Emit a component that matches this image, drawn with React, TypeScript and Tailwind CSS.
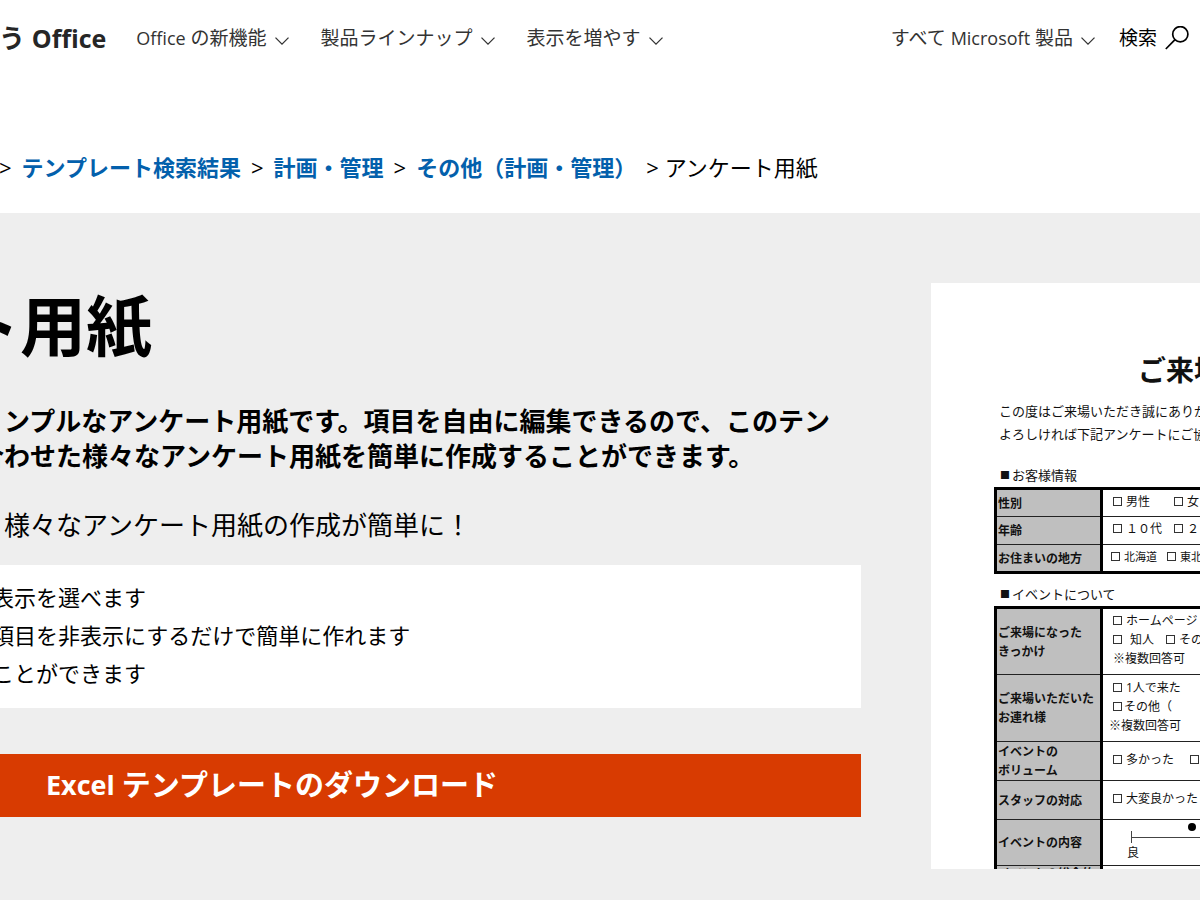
import type { ReactNode } from "react";

function Chevron() {
  return (
    <svg className="mt-1.5 h-2 w-3.5 shrink-0" viewBox="0 0 14 8" fill="none" stroke="#333" strokeWidth="1.3">
      <path d="M0.5 0.6 L7 7.1 L13.5 0.6" />
    </svg>
  );
}

function NavButton({ children }: { children: ReactNode }) {
  return (
    <button type="button" className="flex items-center gap-2 whitespace-nowrap text-[19px] leading-7 text-[#333]">
      <span>{children}</span>
      <Chevron />
    </button>
  );
}

function Latin({ children }: { children: ReactNode }) {
  return <span className="text-[18px]">{children}</span>;
}

function Check({ label, className = "gap-1" }: { label: string; className?: string }) {
  return (
    <label className={`flex shrink-0 items-center whitespace-nowrap ${className}`}>
      <input type="checkbox" className="size-[9px] shrink-0 appearance-none border border-[#333]" />
      <span>{label}</span>
    </label>
  );
}

function SectionTitle({ children }: { children: ReactNode }) {
  return (
    <h3 className="ml-[69px] flex items-center gap-0.5 text-[13px] leading-6">
      <span className="w-2.5 text-[10px]">■</span>
      <span>{children}</span>
    </h3>
  );
}

function FormTable({ children }: { children: ReactNode }) {
  return (
    <table className="ml-[63px] w-[480px] table-fixed border-collapse border-[3px] border-black text-[12px] leading-[19px]">
      <colgroup>
        <col className="w-[106px]" />
        <col />
      </colgroup>
      <tbody>{children}</tbody>
    </table>
  );
}

function FormRow({ title, className, children }: { title: ReactNode; className: string; children?: ReactNode }) {
  return (
    <tr className={`border-b border-[#222] ${className}`}>
      <th scope="row" className="whitespace-nowrap border-r-[3px] border-r-black bg-[#bfbfbf] p-0 pl-px text-left font-bold">
        {title}
      </th>
      <td className="p-0 pb-1 pl-2.5">{children}</td>
    </tr>
  );
}

function SurveySheet() {
  return (
    <div className="h-[586px] w-[600px] shrink-0 overflow-hidden bg-white pt-[69px] text-[#111]">
      <h2 className="ml-[207px] whitespace-nowrap text-[28px] leading-9 font-bold">ご来場</h2>
      <p className="mt-3 mb-[17px] ml-[68px] whitespace-nowrap text-[13px] leading-[23px]">
        この度はご来場いただき誠にありが
        <br />
        よろしければ下記アンケートにご協
      </p>
      <SectionTitle>お客様情報</SectionTitle>
      <FormTable>
        <FormRow title="性別" className="h-7">
          <div className="flex gap-6"><Check label="男性" /><Check label="女" /></div>
        </FormRow>
        <FormRow title="年齢" className="h-7">
          <div className="flex gap-3"><Check label="１０代" /><Check label="２" /></div>
        </FormRow>
        <FormRow title="お住まいの地方" className="h-7">
          <div className="-ml-0.5 flex gap-2.5 text-[11px]"><Check label="北海道" /><Check label="東北" /></div>
        </FormRow>
      </FormTable>
      <div className="h-2" />
      <SectionTitle>イベントについて</SectionTitle>
      <FormTable>
        <FormRow title={<>ご来場になった<br />きっかけ</>} className="h-[67px]">
          <Check label="ホームページ" />
          <div className="flex gap-3"><Check label="知人" className="gap-2" /><Check label="その他" /></div>
          <div>※複数回答可</div>
        </FormRow>
        <FormRow title={<>ご来場いただいた<br />お連れ様</>} className="h-[67px]">
          <Check label="1人で来た" />
          <Check label="その他（" className="gap-0.5" />
          <div className="-ml-1">※複数回答可</div>
        </FormRow>
        <FormRow title={<>イベントの<br />ボリューム</>} className="h-[39px]">
          <div className="flex gap-4"><Check label="多かった" /><Check label="" /></div>
        </FormRow>
        <FormRow title="スタッフの対応" className="h-[39px]">
          <Check label="大変良かった" />
        </FormRow>
        <FormRow title="イベントの内容" className="h-[46px]">
          <svg className="ml-4 h-6 w-[300px]" viewBox="0 0 300 24" fill="none" stroke="#444">
            <path d="M2.5 10 V22 M2.5 16.5 H300" />
            <circle cx="63" cy="6" r="4" fill="#000" stroke="none" />
          </svg>
          <div className="ml-3.5 leading-4">良</div>
        </FormRow>
        <FormRow title={<div className="leading-4">イベントの総合的</div>} className="h-4" />
      </FormTable>
    </div>
  );
}

export default function App() {
  return (
    <div className="min-h-screen overflow-x-hidden bg-[#eee] font-['Open_Sans','Noto_Sans_CJK_JP',sans-serif] text-black">
      <header className="flex h-[76px] items-center justify-between bg-white pr-[11px]">
        <nav className="flex items-center gap-8">
          <a href="#office" className="-ml-px -mr-0.5 whitespace-nowrap text-[26px] leading-9 font-bold text-[#262626]">
            う <span className="text-[25px]">Office</span>
          </a>
          <NavButton><Latin>Office</Latin> の新機能</NavButton>
          <NavButton>製品ラインナップ</NavButton>
          <NavButton>表示を増やす</NavButton>
        </nav>
        <div className="flex items-center gap-6">
          <NavButton>すべて <Latin>Microsoft</Latin> 製品</NavButton>
          <button type="button" className="flex items-center gap-2 whitespace-nowrap text-[19px] leading-7">
            <span>検索</span>
            <svg className="size-6" viewBox="0 0 24 24" fill="none" stroke="#000" strokeWidth="1.7">
              <circle cx="15.3" cy="8.2" r="7.6" />
              <path d="M10 13.6 L0.8 23" />
            </svg>
          </button>
        </div>
      </header>

      <nav className="flex h-[137px] items-end gap-2.5 bg-white pb-[30px] text-[22px] leading-8 whitespace-nowrap">
        <span className="-ml-px">&gt;</span>
        <a href="#results" className="font-bold text-[#0360ac]">テンプレート検索結果</a>
        <span>&gt;</span>
        <a href="#planning" className="font-bold text-[#0360ac]">計画・管理</a>
        <span>&gt;</span>
        <a href="#other" className="font-bold text-[#0360ac]">その他（計画・管理）</a>
        <span>&gt;</span>
        <span className="-ml-1">アンケート用紙</span>
      </nav>

      <main className="flex items-start gap-[70px] pt-[70px]">
        <div className="-mt-0.5 w-[861px] shrink-0">
          <h1 className="-ml-[46px] text-[66px] leading-[88px] font-bold">ト用紙</h1>
          <p className="mt-[35px] -ml-[22px] text-[26px] leading-[35px] font-bold whitespace-nowrap">
            <span className="block pl-[26px]">ンプルなアンケート用紙です。項目を自由に編集できるので、このテン</span>
            <span className="block">合わせた様々なアンケート用紙を簡単に作成することができます。</span>
          </p>
          <p className="mt-[34px] ml-1 text-[26px] leading-[35px] whitespace-nowrap">
            様々なアンケート用紙の作成が簡単に！
          </p>
          <ul className="mt-[22px] -ml-2 bg-white pt-[13px] pb-4 text-[22px] leading-[38px]">
            <li>表示を選べます</li>
            <li>項目を非表示にするだけで簡単に作れます</li>
            <li>ことができます</li>
          </ul>
          <a href="#download" className="mt-[46px] flex h-[63px] items-center bg-[#d83b01] pb-0.5 pl-[46px] text-[29px] leading-10 font-bold whitespace-pre text-white">
            <span className="text-[27px]">Excel </span>
            <span>テンプレートのダウンロード</span>
          </a>
        </div>
        <SurveySheet />
      </main>
    </div>
  );
}
